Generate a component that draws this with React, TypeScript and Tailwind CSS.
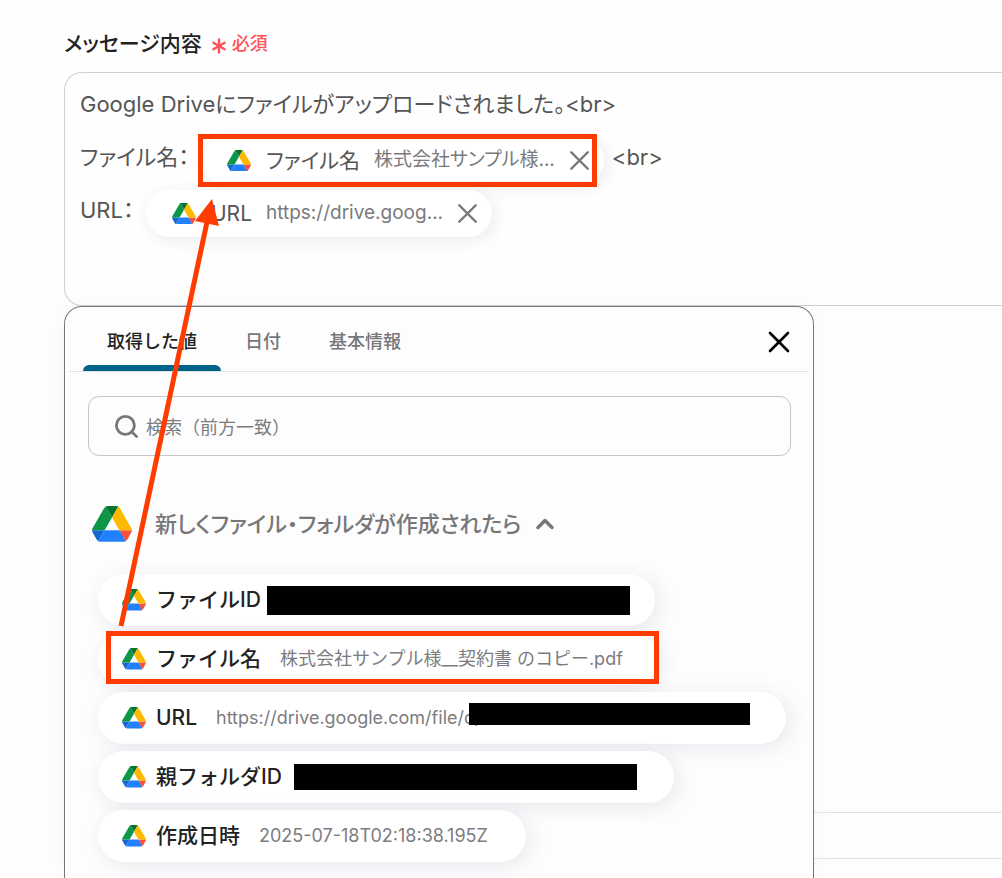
import React, { useState } from 'react';
import { Asterisk, ChevronUp, Search, X } from 'lucide-react';

const DriveIcon: React.FC<{ className?: string }> = ({ className = '' }) => (
  <svg viewBox="0 0 87.3 78" className={`shrink-0 ${className}`} aria-hidden="true">
    <path d="m6.6 66.85 3.85 6.65c.8 1.4 1.95 2.5 3.3 3.3l13.75-23.8h-27.5c0 1.55.4 3.1 1.2 4.5z" fill="#1767d2" />
    <path d="m43.65 25-13.75-23.8c-1.35.8-2.5 1.9-3.3 3.3l-25.4 44a9.06 9.06 0 0 0 -1.2 4.5h27.5z" fill="#0d9648" />
    <path d="m73.55 76.8c1.35-.8 2.5-1.9 3.3-3.3l1.6-2.75 7.65-13.25c.8-1.4 1.2-2.95 1.2-4.5h-27.5l5.85 11.5z" fill="#f8523e" />
    <path d="m43.65 25 13.75-23.8c-1.35-.8-2.9-1.2-4.5-1.2h-18.5c-1.6 0-3.15.45-4.5 1.2z" fill="#08732c" />
    <path d="m59.8 53h-32.3l-13.75 23.8c1.35.8 2.9 1.2 4.5 1.2h50.8c1.6 0 3.15-.45 4.5-1.2z" fill="#2180fc" />
    <path d="m73.4 26.5-12.7-22c-.8-1.4-1.95-2.5-3.3-3.3l-13.75 23.8 16.15 28h27.45c0-1.55-.4-3.1-1.2-4.5z" fill="#ffba00" />
  </svg>
);

interface ChipProps {
  label: string;
  value: string;
  children?: React.ReactNode;
}

const Chip: React.FC<ChipProps> = ({ label, value, children }) => (
  <span
    contentEditable={false}
    className="relative flex h-[47px] items-center self-end rounded-full bg-white pl-[26px] pr-2 shadow-[3px_3px_16px_rgba(60,50,90,0.09)]"
  >
    <DriveIcon className="w-6" />
    <span className="ml-[15px] text-[21px]">{label}</span>
    <span className="ml-3.5 text-[19px] text-[#7a7a7c]">{value}</span>
    <button type="button" aria-label={`${label}を削除`} className="ml-2 text-[#77777a]">
      <X size={33} strokeWidth={1.75} />
    </button>
    {children}
  </span>
);

interface OutputValue {
  label: string;
  value?: string;
  mask?: string;
  width: string;
  highlighted?: boolean;
}

const outputValues: OutputValue[] = [
  { label: 'ファイルID', mask: 'ml-1.5 w-[363px] h-[29px]', width: 'w-[557px]' },
  { label: 'ファイル名', value: '株式会社サンプル様__契約書 のコピー.pdf', width: 'w-[561px]', highlighted: true },
  {
    label: 'URL',
    value: 'https://drive.google.com/file/d/',
    mask: '-ml-3 -mt-2 w-[281px] h-[22px]',
    width: 'w-[688px]'
  },
  { label: '親フォルダID', mask: 'ml-3 w-[343px] h-[26px]', width: 'w-[576px]' },
  { label: '作成日時', value: '2025-07-18T02:18:38.195Z', width: 'w-[428px]' }
];

const tabs = ['取得した値', '日付', '基本情報'];

export default function App() {
  const [activeTab, setActiveTab] = useState(tabs[0]);

  return (
    <div className="relative flex min-h-screen flex-col overflow-hidden bg-[#fefefe] pl-16 pt-7 font-['Inter','Noto_Sans_CJK_JP',sans-serif] text-[#222]">
      {/* Field label */}
      <div className="flex h-8 items-center">
        <span id="message-label" className="text-[21px] font-medium [font-feature-settings:'palt']">
          メッセージ内容
        </span>
        <Asterisk size={26} strokeWidth={2.25} className="ml-1 mt-1 text-[#ff5358]" />
        <span className="text-lg font-medium text-[#ff5358]">必須</span>
      </div>

      {/* Message editor */}
      <div
        role="textbox"
        aria-multiline="true"
        aria-labelledby="message-label"
        contentEditable
        suppressContentEditableWarning
        spellCheck={false}
        className="mt-3 rounded-l-[18px] border border-r-0 border-[#cfcfdb] pb-[68px] pl-[15px] pt-[5px] text-[22px] text-[#555] outline-none [font-feature-settings:'palt']"
      >
        <div className="flex h-[53px] items-center">Google Driveにファイルがアップロードされました。&lt;br&gt;</div>
        <div className="flex h-[53px] items-center">
          <span className="mr-3">ファイル名：</span>
          <Chip label="ファイル名" value="株式会社サンプル様...">
            <span className="pointer-events-none absolute -inset-y-[3px] -left-[3px] right-[7px] border-5 border-[#ff3c00]" />
          </Chip>
          <span className="ml-2">&lt;br&gt;</span>
        </div>
        <div className="flex h-[53px] items-center">
          <span className="mr-3">URL：</span>
          <Chip label="URL" value="https://drive.goog..." />
        </div>
      </div>

      <div className="flex flex-1">
        {/* Value picker */}
        <section className="w-[750px] shrink-0 rounded-t-[18px] border border-b-0 border-[#77777a] bg-[#fdfdfe] pb-3 shadow-[0_0_24px_rgba(60,50,90,0.04)]">
          <header className="mx-1 flex h-[65px] border-b border-[#e3e3e6] pl-3.5 pr-3">
            <div role="tablist" className="flex">
              {tabs.map((tab) => (
                <button
                  key={tab}
                  type="button"
                  role="tab"
                  aria-selected={tab === activeTab}
                  onClick={() => setActiveTab(tab)}
                  className={`relative px-6 pt-1.5 text-lg font-medium ${tab === activeTab ? 'text-[#222]' : 'text-[#77777a]'}`}
                >
                  {tab}
                  {tab === activeTab && (
                    <span className="absolute inset-x-0 bottom-0 h-1.5 rounded-t-md bg-[#006489]" />
                  )}
                </button>
              ))}
            </div>
            <button type="button" aria-label="閉じる" className="ml-auto mt-1.5 text-black">
              <X size={36} strokeWidth={1.75} />
            </button>
          </header>

          <label className="ml-[23px] mr-[22px] mt-6 flex h-[60px] items-center rounded-[11px] border border-[#c6c6ca] px-6">
            <Search size={27} strokeWidth={2.5} className="shrink-0 text-[#77777a]" />
            <input
              type="text"
              aria-label="検索"
              placeholder="検索（前方一致）"
              className="ml-1.5 min-w-0 flex-1 pt-1 text-lg outline-none placeholder:text-[#7c7c7f]"
            />
          </label>

          <button
            type="button"
            aria-expanded="true"
            className="ml-[27px] mt-12 flex h-10 items-center text-[22px] font-medium text-[#77777a] [font-feature-settings:'palt']"
          >
            <DriveIcon className="w-10" />
            <span className="ml-[23px]">新しくファイル・フォルダが作成されたら</span>
            <ChevronUp size={28} strokeWidth={3} className="ml-2.5" />
          </button>

          <ul className="ml-[33px] mt-[30px] flex flex-col items-start gap-[7px]">
            {outputValues.map((item) => (
              <li
                key={item.label}
                className={`relative rounded-full bg-white shadow-[4px_4px_20px_rgba(60,50,90,0.1)] ${item.width}`}
              >
                <button type="button" className="flex h-[52px] w-full items-center pl-6">
                  <DriveIcon className="w-6" />
                  <span className="ml-2.5 text-[21px] font-medium">{item.label}</span>
                  {item.value && <span className="ml-[19px] text-lg text-[#7c7c7f]">{item.value}</span>}
                  {item.mask && <span className={`relative bg-black ${item.mask}`} />}
                </button>
                {item.highlighted && (
                  <span className="pointer-events-none absolute -top-0.5 bottom-px left-2 right-0 border-5 border-[#ff3c00]" />
                )}
              </li>
            ))}
          </ul>
        </section>

        {/* Sections behind the picker */}
        <div className="flex flex-1 flex-col justify-end">
          <div className="h-[46px] border-t border-[#e3e3e6]" />
          <div className="h-5 border-t border-[#e3e3e6]" />
        </div>
      </div>

      {/* Arrow from the picked value to its chip */}
      <svg width="240" height="640" className="pointer-events-none absolute left-0 top-0" aria-hidden="true">
        <path d="M121 626 L207 222" stroke="#ff3c00" strokeWidth="5" />
        <path d="M212 199 L195 221 L219 226 Z" fill="#ff3c00" />
      </svg>
    </div>
  );
}
